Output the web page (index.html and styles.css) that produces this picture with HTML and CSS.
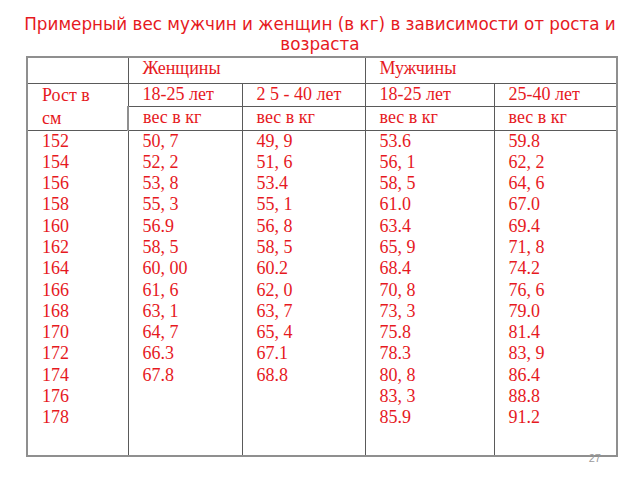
FILE: index.html
```html
<!DOCTYPE html>
<html lang="ru">
<head>
<meta charset="utf-8">
<title>Примерный вес мужчин и женщин</title>
<link rel="stylesheet" href="styles.css">
</head>
<body>
<h1 class="title">Примерный вес мужчин и женщин (в кг) в зависимости от роста и<br>возраста</h1>
<table class="weights">
  <colgroup>
    <col class="c1"><col class="c2"><col class="c3"><col class="c4"><col class="c5">
  </colgroup>
  <tr class="r1">
    <td></td>
    <td colspan="2">Женщины</td>
    <td colspan="2">Мужчины</td>
  </tr>
  <tr class="r2">
    <td rowspan="2" class="height-head">Рост в<br>см</td>
    <td>18-25 лет</td>
    <td>2 5 - 40 лет</td>
    <td>18-25 лет</td>
    <td>25-40 лет</td>
  </tr>
  <tr class="r3">
    <td>вес в кг</td>
    <td>вес в кг</td>
    <td>вес в кг</td>
    <td>вес в кг</td>
  </tr>
  <tr class="r4">
    <td>152<br>154<br>156<br>158<br>160<br>162<br>164<br>166<br>168<br>170<br>172<br>174<br>176<br>178</td>
    <td>50, 7<br>52, 2<br>53, 8<br>55, 3<br>56.9<br>58, 5<br>60, 00<br>61, 6<br>63, 1<br>64, 7<br>66.3<br>67.8</td>
    <td>49, 9<br>51, 6<br>53.4<br>55, 1<br>56, 8<br>58, 5<br>60.2<br>62, 0<br>63, 7<br>65, 4<br>67.1<br>68.8</td>
    <td>53.6<br>56, 1<br>58, 5<br>61.0<br>63.4<br>65, 9<br>68.4<br>70, 8<br>73, 3<br>75.8<br>78.3<br>80, 8<br>83, 3<br>85.9</td>
    <td>59.8<br>62, 2<br>64, 6<br>67.0<br>69.4<br>71, 8<br>74.2<br>76, 6<br>79.0<br>81.4<br>83, 9<br>86.4<br>88.8<br>91.2</td>
  </tr>
</table>
<div class="page-num">27</div>
</body>
</html>
```
FILE: styles.css
```css
html, body {
  margin: 0;
  padding: 0;
  background: #ffffff;
}
body {
  width: 640px;
  height: 480px;
  overflow: hidden;
  font-family: "Liberation Serif", "Times New Roman", serif;
  color: #e6191e;
}
.title {
  margin: 0;
  padding-top: 14px;
  font-family: "DejaVu Sans", sans-serif;
  font-weight: normal;
  font-size: 16.8px;
  line-height: 20px;
  text-align: center;
  color: #e6191e;
}
.weights {
  margin: 2px 0 0 26px;
  border-collapse: collapse;
  table-layout: fixed;
  width: 592px;
  border: 2px solid #8f8f8f;
  font-size: 18px;
  line-height: 21.3px;
}
.c1 { width: 101px; }
.c2 { width: 114px; }
.c3 { width: 123px; }
.c4 { width: 129px; }
.c5 { width: 123px; }
.weights td {
  border: 1px solid #5a5a5a;
  padding: 0 0 0 14px;
  vertical-align: top;
  white-space: nowrap;
}
.weights tr:first-child td { border-top: 2px solid #8f8f8f; }
.weights td:first-child { border-left: 2px solid #8f8f8f; }
.weights td:last-child { border-right: 2px solid #8f8f8f; }
.r4 td { border-bottom: 2px solid #8f8f8f; }
.r1 { height: 26px; }
.r2 { height: 23px; }
.r3 { height: 21px; }
.r4 { height: 326px; }
.height-head {
  line-height: 23px;
}
.page-num {
  margin: -3px 0 0 0;
  padding-right: 39px;
  text-align: right;
  font-family: "Liberation Sans", Arial, sans-serif;
  font-size: 11px;
  line-height: 8px;
  color: #9a9a9a;
}
```
